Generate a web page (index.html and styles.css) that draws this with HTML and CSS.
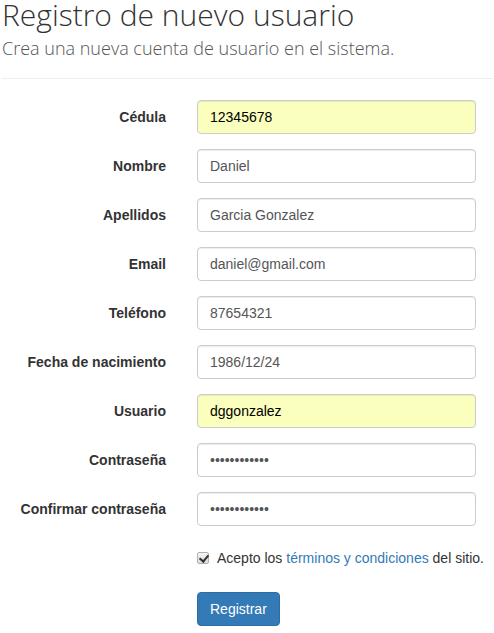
FILE: index.html
```html
<!DOCTYPE html>
<html lang="es">
<head>
<meta charset="utf-8">
<title>Registro de nuevo usuario</title>
<link rel="stylesheet" href="styles.css">
</head>
<body>
<header class="page-header">
  <h1 class="title">Registro de nuevo usuario</h1>
  <p class="subtitle">Crea una nueva cuenta de usuario en el sistema.</p>
</header>
<hr class="divider">
<form class="form">
  <label class="label" for="cedula">Cédula</label>
  <input class="field autofill" id="cedula" type="text" value="12345678">

  <label class="label" for="nombre">Nombre</label>
  <input class="field" id="nombre" type="text" value="Daniel">

  <label class="label" for="apellidos">Apellidos</label>
  <input class="field" id="apellidos" type="text" value="Garcia Gonzalez">

  <label class="label" for="email">Email</label>
  <input class="field" id="email" type="text" value="daniel@gmail.com">

  <label class="label" for="telefono">Teléfono</label>
  <input class="field" id="telefono" type="text" value="87654321">

  <label class="label" for="fecha">Fecha de nacimiento</label>
  <input class="field" id="fecha" type="text" value="1986/12/24">

  <label class="label" for="usuario">Usuario</label>
  <input class="field autofill" id="usuario" type="text" value="dggonzalez">

  <label class="label" for="pass">Contraseña</label>
  <input class="field" id="pass" type="password" value="abcdefghijkl">

  <label class="label" for="pass2">Confirmar contraseña</label>
  <input class="field" id="pass2" type="password" value="abcdefghijkl">

  <div class="check-row">
    <label class="check-label"><input class="check" type="checkbox" checked>Acepto los <a class="link" href="#">términos y condiciones</a> del sitio.</label>
  </div>

  <div class="button-row">
    <button class="btn" type="button">Registrar</button>
  </div>
</form>
</body>
</html>
```
FILE: styles.css
```css
* { box-sizing: border-box; }
body {
  margin: 0;
  padding: 0 1px 0 2px;
  font-family: "Liberation Sans", Arial, sans-serif;
  font-size: 14px;
  line-height: 20px;
  color: #333;
  background: #fff;
}
.title {
  margin: 0;
  font-family: "Open Sans", sans-serif;
  font-weight: 300;
  font-size: 30px;
  line-height: 30px;
  color: #333;
}
.subtitle {
  margin: 6px 0 0 0;
  font-family: "Open Sans", sans-serif;
  font-weight: 300;
  font-size: 18px;
  line-height: 24px;
  color: #555;
}
.divider {
  margin: 18px 0 21px 0;
  border: 0;
  border-top: 1px solid #eee;
  height: 0;
}
.form {
  display: grid;
  grid-template-columns: 164px 279px;
  column-gap: 31px;
  row-gap: 15px;
  align-items: start;
}
.label {
  text-align: right;
  font-weight: bold;
  padding-top: 7px;
  line-height: 20px;
  color: #333;
  white-space: nowrap;
}
.field {
  display: block;
  width: 279px;
  height: 34px;
  padding: 6px 12px;
  font-family: "Liberation Sans", Arial, sans-serif;
  font-size: 14px;
  line-height: 20px;
  color: #555;
  background: #fff;
  border: 1px solid #ccc;
  border-radius: 4px;
  box-shadow: inset 0 1px 1px rgba(0,0,0,.075);
  outline: none;
}
.field.autofill {
  background: rgb(250, 255, 189);
  color: #000;
}
.check-row {
  grid-column: 2;
  padding-top: 7px;
  min-height: 27px;
}
.check-label {
  display: block;
  white-space: nowrap;
  font-weight: normal;
}
.check {
  -webkit-appearance: none;
  appearance: none;
  position: relative;
  display: inline-block;
  vertical-align: -1px;
  width: 12px;
  height: 12px;
  margin: 0 8px 0 0;
  border: 1px solid #b0b0b0;
  border-radius: 2px;
  background: linear-gradient(#f4f4f4, #dedede);
}
.check::after {
  content: "";
  position: absolute;
  left: 3px;
  top: 0;
  width: 4px;
  height: 7px;
  border: solid #333;
  border-width: 0 2px 2px 0;
  transform: rotate(40deg);
}
.link {
  color: #337ab7;
  text-decoration: none;
}
.button-row {
  grid-column: 2;
  padding-top: 9px;
}
.btn {
  display: inline-block;
  padding: 6px 12px;
  font-family: "Liberation Sans", Arial, sans-serif;
  font-size: 14px;
  line-height: 20px;
  color: #fff;
  background: #337ab7;
  border: 1px solid #2e6da4;
  border-radius: 4px;
  cursor: pointer;
}
```
